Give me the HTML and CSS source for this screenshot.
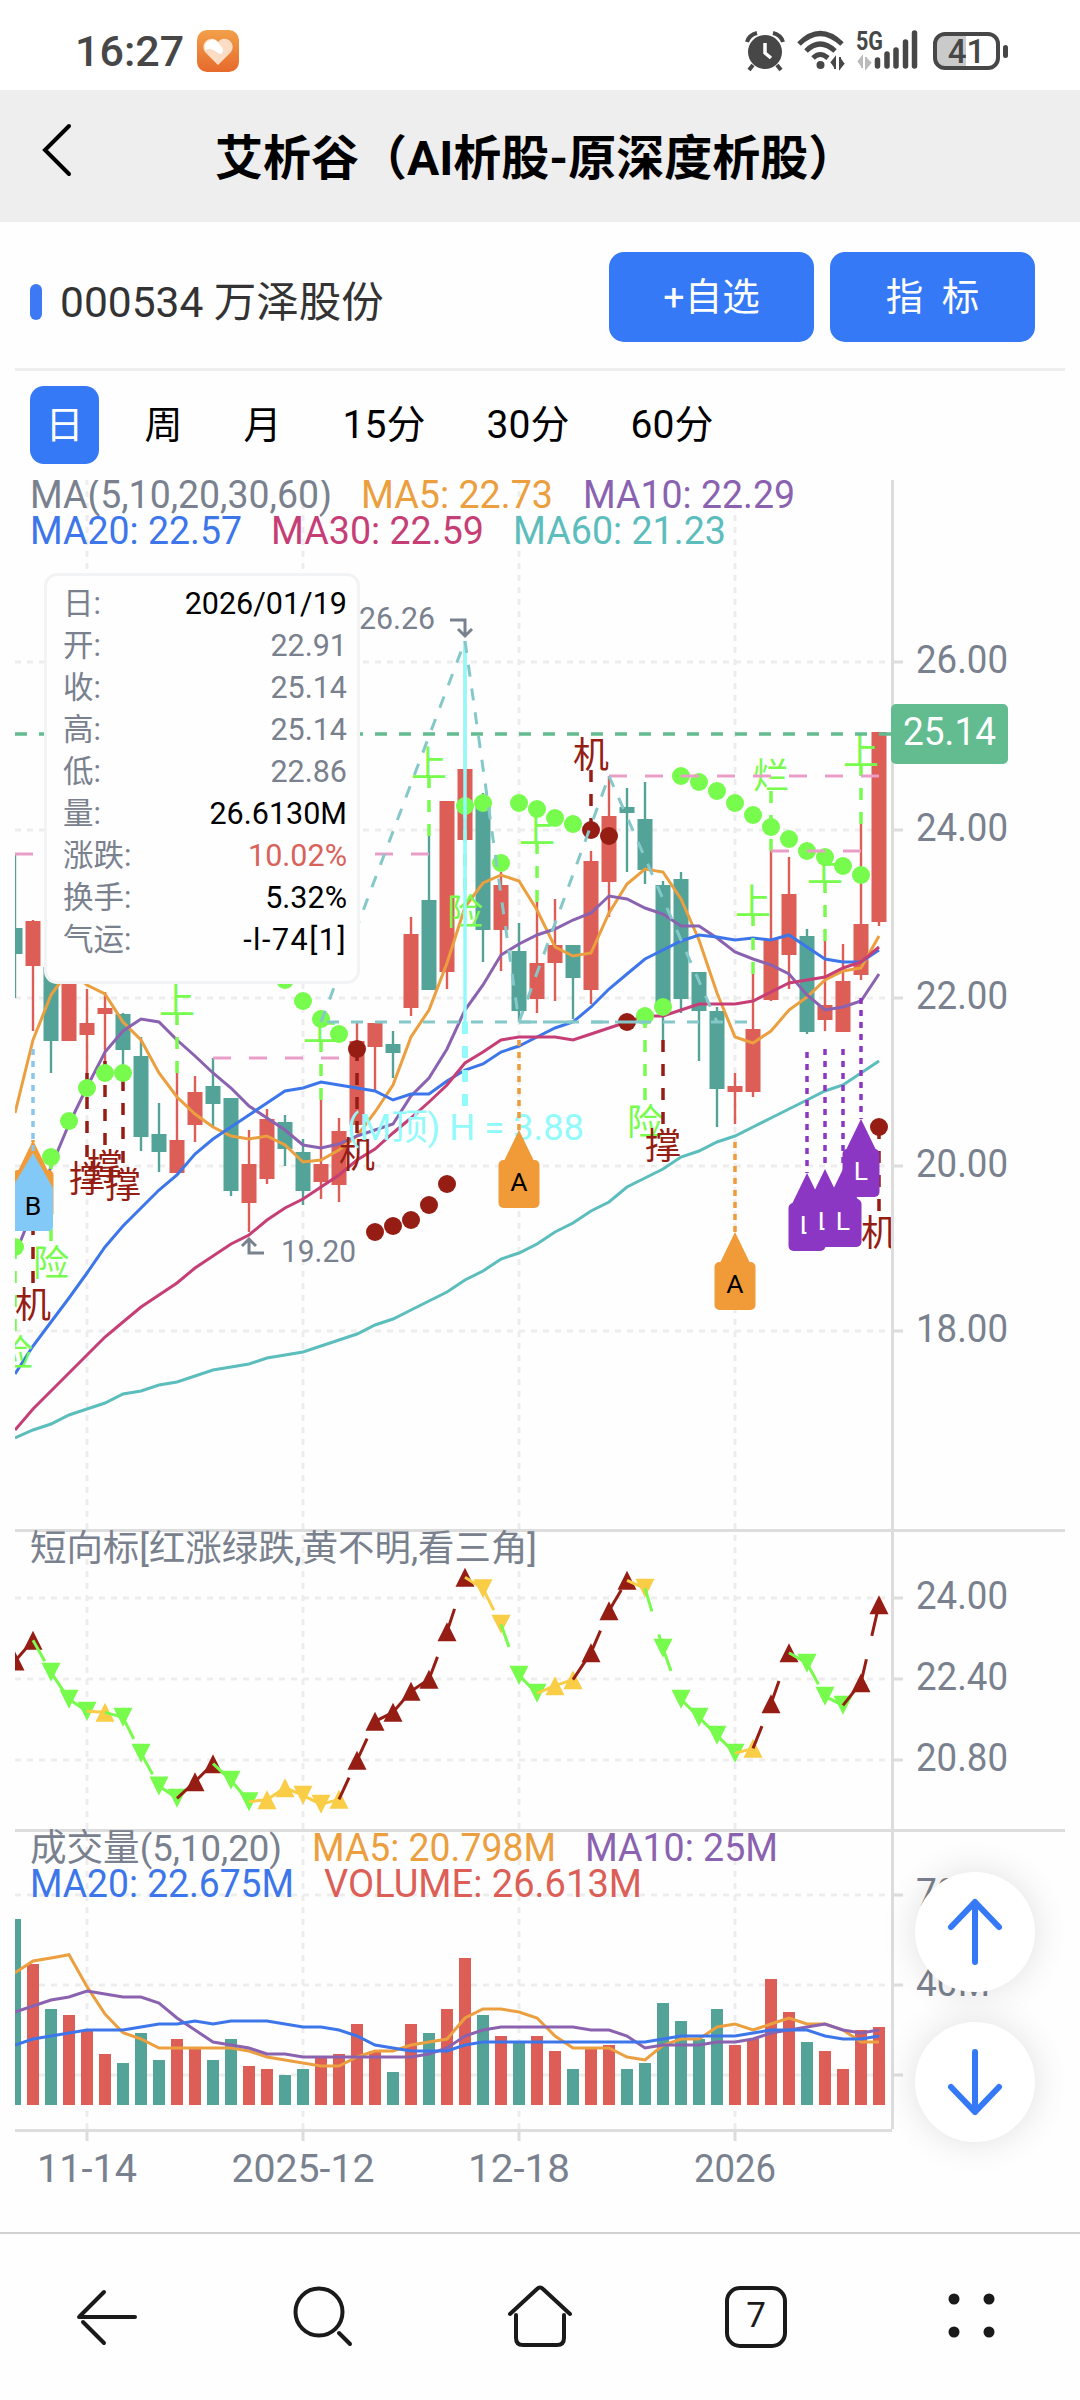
FILE: index.html
```html
<!DOCTYPE html>
<html lang="zh-CN">
<head>
  <meta charset="UTF-8">
  <meta name="viewport" content="width=device-width, initial-scale=1.0">
  <title>艾析谷</title>
  <link rel="stylesheet" href="styles.css">
</head>
<body>
  <div class="status-bar">
    <span class="clock">16:27</span>
    <svg class="app-icon" viewBox="0 0 42 42">
      <defs>
        <linearGradient id="appBg" x1="0" y1="0" x2="0" y2="1">
          <stop offset="0" stop-color="#f2a04a"/>
          <stop offset="1" stop-color="#e66a2c"/>
        </linearGradient>
      </defs>
      <rect width="42" height="42" rx="10" fill="url(#appBg)"/>
      <path d="M21 35 L8 22 A8 8 0 0 1 21 12 A8 8 0 0 1 34 22 Z" fill="#fbdcc4"/>
      <path d="M8 20 A8 8 0 0 1 20 11 L26 19 Q26 26 21 23 Q13 17 8 20 Z" fill="#fff"/>
    </svg>
    <div class="status-right">
      <svg width="40" height="42" viewBox="0 0 40 42">
        <circle cx="20" cy="22" r="17" fill="#474747"/>
        <path d="M2 12 Q4 5 12 3 M38 12 Q36 5 28 3 M8 35 L4 40 M32 35 L36 40" fill="none" stroke="#474747" stroke-width="4"/>
        <path d="M20 13 V23 L26 28" fill="none" stroke="#fff" stroke-width="3.500"/>
      </svg>
      <svg class="wifi" width="50" height="42" viewBox="0 0 50 42">
        <g fill="none" stroke="#474747" stroke-width="5">
          <path d="M2 14 Q23 -7 45 14"/>
          <path d="M9 21 Q23 7 38 21"/>
          <path d="M16 28 Q23 21 31 28"/>
        </g>
        <circle cx="23.500" cy="35" r="4" fill="#474747"/>
        <path d="M34 33 L38 28 V39 M47 33 L43 38 V27" fill="#474747" stroke="#474747" stroke-width="2"/>
      </svg>
      <svg width="64" height="42" viewBox="0 0 64 42">
        <text x="0" y="20" class="net" textLength="27" lengthAdjust="spacingAndGlyphs">5G</text>
        <path d="M2 32 L6 27 V38 M15 32 L10 38 V27" fill="#bbb" stroke="#bbb" stroke-width="2"/>
        <path d="M21.500 30 V36 M31 24 V36 M40 20 V36 M49.500 12 V36 M58.500 3 V36" stroke="#474747" stroke-width="5.500" stroke-linecap="round"/>
      </svg>
      <div class="battery"><span>41</span></div>
    </div>
  </div>

  <header class="nav">
    <svg width="30" height="54" viewBox="0 0 30 54"><path d="M27 3 L3 27 L27 51" fill="none" stroke="#000" stroke-width="4" stroke-linecap="round"/></svg>
    <h1>艾析谷（AI析股-原深度析股）</h1>
  </header>

  <main>
    <div class="stock">
      <i class="mark"></i>
      <span class="stock-name">000534 万泽股份</span>
      <button>+自选</button>
      <button>指&nbsp; 标</button>
    </div>

    <div class="tabs">
      <span class="tab active">日</span>
      <span class="tab">周</span>
      <span class="tab">月</span>
      <span class="tab wide">15分</span>
      <span class="tab wide">30分</span>
      <span class="tab wide">60分</span>
    </div>

    <div class="chart">
      <svg id="kline" width="1080" height="1752" viewBox="0 480 1080 1752"></svg>

      <div class="tip">
        <div class="row"><span>日:</span><b>2026/01/19</b></div>
        <div class="row"><span>开:</span><b class="gray">22.91</b></div>
        <div class="row"><span>收:</span><b class="gray">25.14</b></div>
        <div class="row"><span>高:</span><b class="gray">25.14</b></div>
        <div class="row"><span>低:</span><b class="gray">22.86</b></div>
        <div class="row"><span>量:</span><b>26.6130M</b></div>
        <div class="row"><span>涨跌:</span><b class="red">10.02%</b></div>
        <div class="row"><span>换手:</span><b>5.32%</b></div>
        <div class="row"><span>气运:</span><b class="luck">-l-74[1]</b></div>
      </div>

      <div class="floats">
        <div class="float-btn"><svg width="60" height="72" viewBox="0 0 60 72"><path d="M30 66 V6 M6 31 L30 6 L54 31"/></svg></div>
        <div class="float-btn"><svg width="60" height="72" viewBox="0 0 60 72"><path d="M30 6 V66 M6 41 L30 66 L54 41"/></svg></div>
      </div>
    </div>
  </main>

  <footer class="bottom-bar">
    <svg viewBox="0 0 70 70"><path d="M6 36 H62 M31 11 L7 35 M10 41 L31 62"/></svg>
    <svg viewBox="0 0 70 70"><circle cx="30" cy="31" r="23.500"/><path d="M50 52 L61 63"/></svg>
    <svg viewBox="0 0 70 70"><path d="M5 33 L32 8 Q35 5 38 8 L65 33 M11 34 V57 Q11 64 18 64 H52 Q59 64 59 57 V34"/></svg>
    <svg viewBox="0 0 70 70"><rect x="6" y="7" width="58" height="58" rx="13"/><text x="35" y="46" text-anchor="middle">7</text></svg>
    <svg viewBox="0 0 70 70"><g class="dots"><circle cx="17" cy="18" r="5.500"/><circle cx="52" cy="18" r="5.500"/><circle cx="17" cy="51" r="5.500"/><circle cx="52" cy="51" r="5.500"/></g></svg>
  </footer>

  <script src="chart.js"></script>
</body>
</html>
```
FILE: styles.css
```css
* {
  box-sizing: border-box;
}
body {
  margin: 0;
  width: 1080px;
  height: 2400px;
  background: #fefefe;
  font-family: Roboto, "Noto Sans CJK SC", sans-serif;
  display: flex;
  flex-direction: column;
  overflow: hidden;
}
.status-bar {
  height: 90px;
  padding: 12px 80px 0 75px;
  background: #fff;
  display: flex;
  align-items: center;
  flex: none;
}
.clock {
  font-size: 43px;
  font-weight: 500;
  color: #474747;
  width: 122px;
}
.app-icon {
  width: 42px;
  height: 42px;
}
.status-right {
  margin-left: auto;
  display: flex;
  align-items: center;
}
.wifi {
  margin: 0 9px 0 12px;
}
.net {
  font-size: 25px;
  font-weight: 700;
  fill: #474747;
}
.battery {
  position: relative;
  width: 67px;
  height: 38px;
  margin-left: 13px;
  border: 4px solid #474747;
  border-radius: 12px;
  background: linear-gradient(90deg, #cacaca 50%, #fff 50%);
  color: #474747;
  font-size: 33px;
  font-weight: 500;
  line-height: 32px;
  text-align: center;
}
.battery::after {
  content: "";
  position: absolute;
  right: -12px;
  top: 9px;
  width: 5px;
  height: 13px;
  border-radius: 3px;
  background: #474747;
}
.nav {
  height: 132px;
  flex: none;
  background: #eee;
  display: flex;
  align-items: center;
  padding: 0 42px 12px;
}
.nav h1 {
  margin: 7px 0 0 143px;
  font-size: 48px;
  font-weight: 700;
  color: #000;
  white-space: nowrap;
}
.stock {
  height: 149px;
  margin: 0 15px;
  padding: 30px 30px 0 15px;
  border-bottom: 3px solid #eee;
  display: flex;
  align-items: flex-start;
}
.mark {
  width: 12px;
  height: 36px;
  margin-top: 32px;
  border-radius: 6px;
  background: #3d79f5;
}
.stock-name {
  margin: 25px auto 0 18px;
  font-size: 42.500px;
  line-height: 52px;
  color: #333;
}
.stock button {
  width: 205px;
  height: 90px;
  margin-left: 16px;
  padding: 0 0 8px;
  border: none;
  border-radius: 15px;
  background: #3579f6;
  color: #fff;
  font-family: inherit;
  font-size: 37.500px;
}
.tabs {
  height: 109px;
  padding: 15px 30px 0;
  display: flex;
}
.tab {
  width: 69px;
  height: 78px;
  margin-right: 30px;
  border-radius: 14px;
  font-size: 38px;
  line-height: 78px;
  text-align: center;
}
.tab.wide {
  width: 114px;
  font-size: 39px;
}
.tab.active {
  background: #3579f6;
  color: #fff;
}
.chart {
  position: relative;
  height: 1752px;
}
.chart svg {
  display: block;
}
.tip {
  position: absolute;
  left: 44px;
  top: 93px;
  width: 316px;
  height: 411px;
  padding: 7px 10px 0 16px;
  border: 3px solid #f2f3f5;
  border-radius: 13px;
  background: #fefefe;
  font-size: 30.500px;
}
.tip .row {
  display: flex;
  justify-content: space-between;
  height: 42px;
  line-height: 42px;
  color: #7a818e;
}
.tip b {
  font-weight: 400;
  color: #000;
}
.tip .gray {
  color: #7a818e;
}
.tip .red {
  color: #d9625a;
}
.tip .luck {
  letter-spacing: 1.500px;
}
.floats {
  position: absolute;
  left: 915px;
  top: 1392px;
}
.float-btn {
  width: 120px;
  height: 120px;
  margin-bottom: 30px;
  border-radius: 50%;
  background: #fff;
  box-shadow: 0 0 36px rgba(0, 0, 0, 0.120);
  display: flex;
  align-items: center;
  justify-content: center;
}
.float-btn path {
  fill: none;
  stroke: #3579f6;
  stroke-width: 6;
  stroke-linecap: round;
  stroke-linejoin: round;
}
.bottom-bar {
  height: 168px;
  flex: none;
  border-top: 2px solid #d0d0d0;
  padding: 47px 73px 0 73px;
  display: flex;
  justify-content: space-between;
}
.bottom-bar svg {
  width: 70px;
  height: 70px;
  fill: none;
  stroke: #1a1a1a;
  stroke-width: 4;
  stroke-linecap: round;
}
.bottom-bar text {
  fill: #1a1a1a;
  stroke: none;
  font-size: 35px;
}
.bottom-bar .dots {
  fill: #1a1a1a;
  stroke: none;
}
```
FILE: chart.js
```js
const RED = '#dc5e56', TEAL = '#54a398', GREEN = '#77fb4c', DARK = '#951d14';
const YELLOW = '#f9cd46', GRAY = '#7a818e', ORANGE = '#eb9f3f', PURPLE = '#8a62b0';
const BLUE = '#3c76ea', PINK = '#c63e76', CYAN = '#5cbdbd', SKY = '#85c8c9', AQUA = '#93fafc';

const px = i => 15 + 18 * i;
let out = '';

function line(x1, y1, x2, y2, color, w, dash) {
  out += `<line x1="${x1}" y1="${y1}" x2="${x2}" y2="${y2}" stroke="${color}" stroke-width="${w}"${dash ? ` stroke-dasharray="${dash}"` : ''}/>`;
}
function rect(x, y, w, h, color, r) {
  out += `<rect x="${x}" y="${y}" width="${w}" height="${h}" fill="${color}" rx="${r || 0}"/>`;
}
function poly(ys, color) {
  out += `<polyline points="${ys.map((y, i) => px(i) + ',' + y).join(' ')}" fill="none" stroke="${color}" stroke-width="3"/>`;
}
// len squeezes the text to a fixed width, anchor defaults to start
function text(x, y, s, color, size, len, anchor) {
  out += `<text x="${x}" y="${y}" fill="${color}" font-size="${size}" text-anchor="${anchor || 'start'}"${len ? ` textLength="${len}" lengthAdjust="spacingAndGlyphs"` : ''}>${s}</text>`;
}

// [up, high, low, body top, body bottom]
const candles = [
  [0,854,998,928,954],[1,920,1031,921,966],[0,960,1073,967,1041],[1,960,1041,965,1041],[1,989,1073,1023,1035],
  [1,992,1065,1008,1014],[0,1013,1079,1014,1050],[0,1037,1151,1056,1137],[0,1103,1172,1134,1152],[1,1073,1173,1140,1173],
  [1,1076,1142,1092,1125],[0,1058,1127,1086,1104],[0,1098,1196,1098,1191],[1,1130,1232,1164,1203],[1,1109,1184,1119,1179],
  [0,1115,1166,1122,1149],[0,1139,1205,1152,1191],[1,1100,1199,1164,1182],[1,1118,1202,1131,1185],[1,1023,1125,1041,1125],
  [1,1023,1090,1023,1047],[0,1031,1078,1044,1053],[1,917,1016,934,1008],[0,836,990,900,990],[1,801,989,801,972],
  [1,641,840,769,840],[0,793,962,803,930],[1,872,971,885,930],[0,923,1020,951,1011],[1,902,1013,963,999],
  [1,899,1001,945,963],[0,945,1019,945,978],[1,851,1004,861,990],[1,776,917,816,882],[0,788,872,807,813],
  [0,782,884,819,870],[0,881,1040,885,1005],[0,872,1013,879,999],[0,972,1061,972,1011],[0,1007,1127,1011,1089],
  [1,1073,1124,1086,1092],[1,974,1097,1029,1092],[1,851,1001,939,1000],[1,857,989,894,955],[0,929,1034,936,1032],
  [1,941,1031,1005,1020],[1,944,1032,981,1032],[1,824,980,924,975],[1,732,926,732,922]
];
const ma5 = [1113,1040,995,970,985,994,1022,1040,1073,1097,1114,1127,1136,1139,1136,1145,1162,1160,1150,1136,1112,1085,1037,1010,963,907,883,875,881,910,947,956,953,913,884,869,872,899,940,993,1037,1043,1031,1010,997,980,971,968,936];
const ma10 = [1255,1210,1167,1124,1087,1052,1031,1019,1022,1040,1056,1073,1088,1106,1118,1130,1145,1148,1144,1136,1130,1124,1096,1078,1049,1010,985,955,944,935,929,920,913,896,899,908,914,926,926,938,952,959,965,974,995,1010,1007,1001,974];
const ma20 = [1374,1346,1322,1298,1273,1247,1226,1208,1190,1175,1154,1139,1127,1115,1103,1091,1088,1082,1085,1088,1091,1100,1094,1094,1081,1070,1064,1052,1046,1037,1028,1022,1007,989,974,959,950,941,935,937,940,938,940,935,947,959,962,962,950];
const ma30 = [1430,1409,1391,1373,1355,1337,1322,1307,1295,1283,1268,1256,1244,1235,1220,1208,1199,1187,1175,1160,1149,1133,1118,1102,1085,1063,1052,1040,1037,1037,1037,1040,1034,1028,1022,1016,1016,1010,1004,1004,1004,1001,992,983,980,977,968,962,947];
const ma60 = [1438,1430,1424,1415,1409,1403,1394,1391,1385,1382,1376,1370,1367,1364,1358,1355,1352,1346,1340,1334,1325,1319,1310,1301,1292,1280,1271,1259,1253,1244,1232,1223,1211,1202,1187,1178,1169,1157,1151,1142,1136,1127,1118,1109,1100,1091,1085,1073,1061];

const dots = [
  [GREEN, [[0,1247],[2,1157],[3,1121],[4,1088],[5,1073],[6,1073],[15,980],[16,1001],[17,1019],[18,1034],[25,806],[26,803],[27,863],[28,803],[29,809],[30,818],[31,824],[35,1016],[36,1007],[37,776],[38,782],[39,791],[40,803],[41,815],[42,827],[43,839],[44,851],[45,857],[46,866],[47,875]]],
  [DARK, [[19,1049],[20,1232],[21,1226],[22,1220],[23,1205],[24,1184],[32,830],[33,836],[34,1022],[48,1127]]]
];
const marksUp = [[9,1073,'上'],[17,1100,'上'],[23,836,'上'],[29,902,'上'],[41,974,'上'],[42,851,'烂'],[45,941,'上'],[47,824,'上'],[32,830,'机']];
const marksDown = [[0,1247,'险'],[1,1199,'机'],[2,1157,'险'],[4,1073,'撑'],[5,1061,'撑'],[6,1079,'撑'],[19,1049,'机'],[25,806,'险'],[35,1016,'险'],[36,1040,'撑'],[48,1127,'机']];

// grid
[662, 830, 998, 1166, 1331, 1598, 1679, 1760, 1895, 1985, 2075].forEach(y => {
  line(15, y, 892, y, '#ededed', 3, '6 6');
  line(894, y, 903, y, '#ddd', 3);
});
[4, 16, 28, 40].forEach(i => {
  line(px(i), 479, px(i), 2130, '#ededed', 3, '6 6');
  line(px(i), 2130, px(i), 2141, '#ddd', 3);
});

out += '<g clip-path="url(#plot)">';
candles.forEach((c, i) => {
  const color = c[0] ? RED : TEAL;
  line(px(i), c[1], px(i), c[2], color, 2.4);
  rect(px(i) - 7.5, c[3], 15, c[4] - c[3], color);
});
poly(ma5, ORANGE);
poly(ma10, PURPLE);
poly(ma20, BLUE);
poly(ma30, PINK);
poly(ma60, CYAN);

// signals
marksUp.forEach(([i, y, s]) => {
  const color = s === '机' ? DARK : GREEN;
  line(px(i), y, px(i), y - 60, color, 3.5, '12 12');
  text(px(i), y - (s === '上' ? 59 : 62), s, color, 36, 0, 'middle');
});
marksDown.forEach(([i, y, s]) => {
  const color = s === '险' ? GREEN : DARK;
  line(px(i), y, px(i), y + 84, color, 3.5, '12 12');
  text(px(i), y + 118.5, s, color, 36, 0, 'middle');
});
dots.forEach(([color, list]) => list.forEach(([i, y]) => {
  out += `<circle cx="${px(i)}" cy="${y}" r="9" fill="${color}"/>`;
}));
[[0, 23, 854], [11, 18, 1058], [33, 48, 776], [42, 47, 851]].forEach(([a, b, y]) => {
  line(px(a), y, px(b), y, '#ea9dc6', 3, '18 18');
});

// M top
line(465, 641, 465, 1022, AQUA, 3.5);
line(465, 1022, 465, 1106, AQUA, 6, '12 12');
text(347, 1140, '(M顶) H = 3.88', AQUA, 36, 237);
line(321, 1022, 465, 641, SKY, 3, '12 12');
line(465, 641, 519, 1022, SKY, 3, '12 12');
line(519, 1022, 609, 776, SKY, 3, '12 12');
line(609, 776, 717, 1022, SKY, 3, '12 12');
line(327, 1022, 519, 1022, SKY, 3, '12 12');
line(519, 1022, 750, 1022, SKY, 3, '12 12');
line(519, 1022, 652, 1022, SKY, 3, '18 18');

function flag(x, from, tip, w, color, label, labelColor) {
  line(x, from, x, tip, color, 3.5, '6 6');
  out += `<path d="M${x} ${tip} L${x + 16} ${tip + 33} H${x - 16} Z" fill="${color}"/>`;
  rect(x - w / 2, tip + 30, w, 48, color, 5);
  if (label) text(x, tip + 61, label, labelColor, 26.5, 0, 'middle');
}
flag(33, 1142, 1140, 41, '#f09b38', '');
out += '<path d="M33 1153 L53 1188 V1226 Q53 1231 48 1231 H12 V1188 Z" fill="#82c9f8"/>';
line(33, 1049, 33, 1152, '#8bc6e8', 3.5, '6 6');
text(33, 1215, 'B', '#000', 26.5, 0, 'middle');
flag(519, 1040, 1130, 41, '#f09b38', 'A', '#000');
flag(735, 1142, 1232, 41, '#f09b38', 'A', '#000');
flag(807, 1052, 1173, 37, '#8b37c4', 'L', '#fff');
flag(825, 1049, 1169, 37, '#8b37c4', 'L', '#fff');
flag(843, 1049, 1169, 37, '#8b37c4', 'L', '#fff');
flag(861, 998, 1119, 37, '#8b37c4', 'L', '#fff');
out += '</g>';

// highest and lowest price
text(359, 628.5, '26.26', GRAY, 32, 76);
out += `<path d="M450 620 H465 V635 M458 629 L465 636 L472 629" fill="none" stroke="${GRAY}" stroke-width="3"/>`;
text(281, 1262, '19.20', GRAY, 32, 75);
out += `<path d="M264 1253 H249 V1240 M242 1246 L249 1239 L256 1246" fill="none" stroke="${GRAY}" stroke-width="3"/>`;

// short trend, d/g/y = dark, green, yellow; upper case points up
const trend = [[483,'D'],[421,'D'],[517,'g'],[598,'g'],[634,'g'],[637,'Y'],[652,'g'],[760,'g'],[858,'g'],[895,'g'],[845,'D'],[791,'D'],[841,'g'],[905,'g'],[899,'Y'],[863,'Y'],[886,'y'],[913,'y'],[898,'Y'],[781,'D'],[664,'D'],[637,'D'],[574,'D'],[538,'D'],[395,'D'],[232,'D'],[266,'y'],[373,'y'],[526,'g'],[580,'g'],[557,'Y'],[539,'Y'],[458,'D'],[332,'D'],[241,'D'],[265,'y'],[445,'g'],[598,'g'],[652,'g'],[706,'g'],[760,'g'],[745,'Y'],[611,'D'],[458,'D'],[490,'g'],[589,'g'],[616,'g'],[548,'D'],[314,'D']];
out += '<g clip-path="url(#plot)">';
trend.forEach(([v, t], i) => {
  const color = { d: DARK, g: GREEN, y: YELLOW }[t.toLowerCase()];
  const x = px(i), y = 1500 + v / 3;
  const d = t === t.toUpperCase() ? 9.5 : -9.5;
  if (i) line(x - 18, 1500 + trend[i - 1][0] / 3, x, y, color, 3, '24 24');
  out += `<path d="M${x} ${y - d} L${x + 9.5} ${y + d} H${x - 9.5} Z" fill="${color}"/>`;
});

// volume
const vol = [297,432,567,585,630,702,729,639,720,657,684,720,657,738,747,765,747,711,702,612,693,756,612,639,567,414,585,648,665,648,693,747,684,675,747,729,549,603,657,567,675,657,477,576,666,693,747,630,621];
const vma5 = [458,423,414,404,500,582,638,657,684,684,684,684,684,693,711,720,729,738,738,711,693,693,675,666,657,594,567,567,576,594,648,684,684,684,711,720,676,657,657,621,612,630,612,594,612,612,630,666,666];
const vma10 = [576,558,540,531,513,522,531,531,549,594,630,666,675,684,702,702,711,711,711,711,711,711,711,702,684,648,630,621,621,621,621,621,630,630,648,684,675,675,675,666,666,657,639,630,621,612,630,639,630];
const vma20 = [675,657,648,639,630,630,630,621,612,612,603,612,603,603,603,612,621,621,630,648,675,684,693,693,693,675,666,666,666,666,666,666,666,666,666,666,657,648,648,648,648,639,630,630,630,648,657,657,648];
vol.forEach((v, i) => rect(px(i) - 6, 1820 + v / 3, 12, 285 - v / 3, candles[i][0] ? RED : TEAL));
poly(vma5.map(v => 1820 + v / 3), ORANGE);
poly(vma10.map(v => 1820 + v / 3), PURPLE);
poly(vma20.map(v => 1820 + v / 3), BLUE);
out += '</g>';

// axes
line(15, 1530.5, 1065, 1530.5, '#ddd', 3);
line(15, 1830.5, 1065, 1830.5, '#ddd', 3);
line(15, 2130.5, 892, 2130.5, '#ddd', 3);
line(892.5, 480, 892.5, 2129, '#ddd', 3);
[[662,'26.00'],[830,'24.00'],[998,'22.00'],[1166,'20.00'],[1331,'18.00'],[1598,'24.00'],[1679,'22.40'],[1760,'20.80']].forEach(([y, s]) => text(916, y + 11, s, GRAY, 39, 92));
text(916, 1906, '70M', GRAY, 39, 74);
text(916, 1996, '40M', GRAY, 39, 74);
text(87, 2182, '11-14', GRAY, 39, 100, 'middle');
text(303, 2182, '2025-12', GRAY, 39, 143, 'middle');
text(519, 2182, '12-18', GRAY, 39, 102, 'middle');
text(735, 2182, '2026', GRAY, 39, 82, 'middle');

// last price
line(15, 734, 892, 734, '#62bc90', 3.5, '12 12');
rect(891, 704, 117, 60, '#62bc90', 5);
text(903, 745, '25.14', '#fff', 39, 93);

// legends
text(30, 508, 'MA(5,10,20,30,60)', GRAY, 38, 302);
text(361, 508, 'MA5: 22.73', ORANGE, 38, 192);
text(583, 508, 'MA10: 22.29', PURPLE, 38, 212);
text(30, 544, 'MA20: 22.57', BLUE, 38, 212);
text(271, 544, 'MA30: 22.59', PINK, 38, 213);
text(513, 544, 'MA60: 21.23', CYAN, 38, 213);
text(30, 1561, '短向标[红涨绿跌,黄不明,看三角]', GRAY, 36, 507);
text(30, 1861, '成交量(5,10,20)', GRAY, 37, 252);
text(312, 1861, 'MA5: 20.798M', ORANGE, 38, 244);
text(585, 1861, 'MA10: 25M', PURPLE, 38, 193);
text(30, 1897, 'MA20: 22.675M', BLUE, 38, 264);
text(324, 1897, 'VOLUME: 26.613M', RED, 38, 318);

document.getElementById('kline').innerHTML =
  '<defs><clipPath id="plot"><rect x="15" y="480" width="876" height="1650"/></clipPath></defs>' + out;
```
